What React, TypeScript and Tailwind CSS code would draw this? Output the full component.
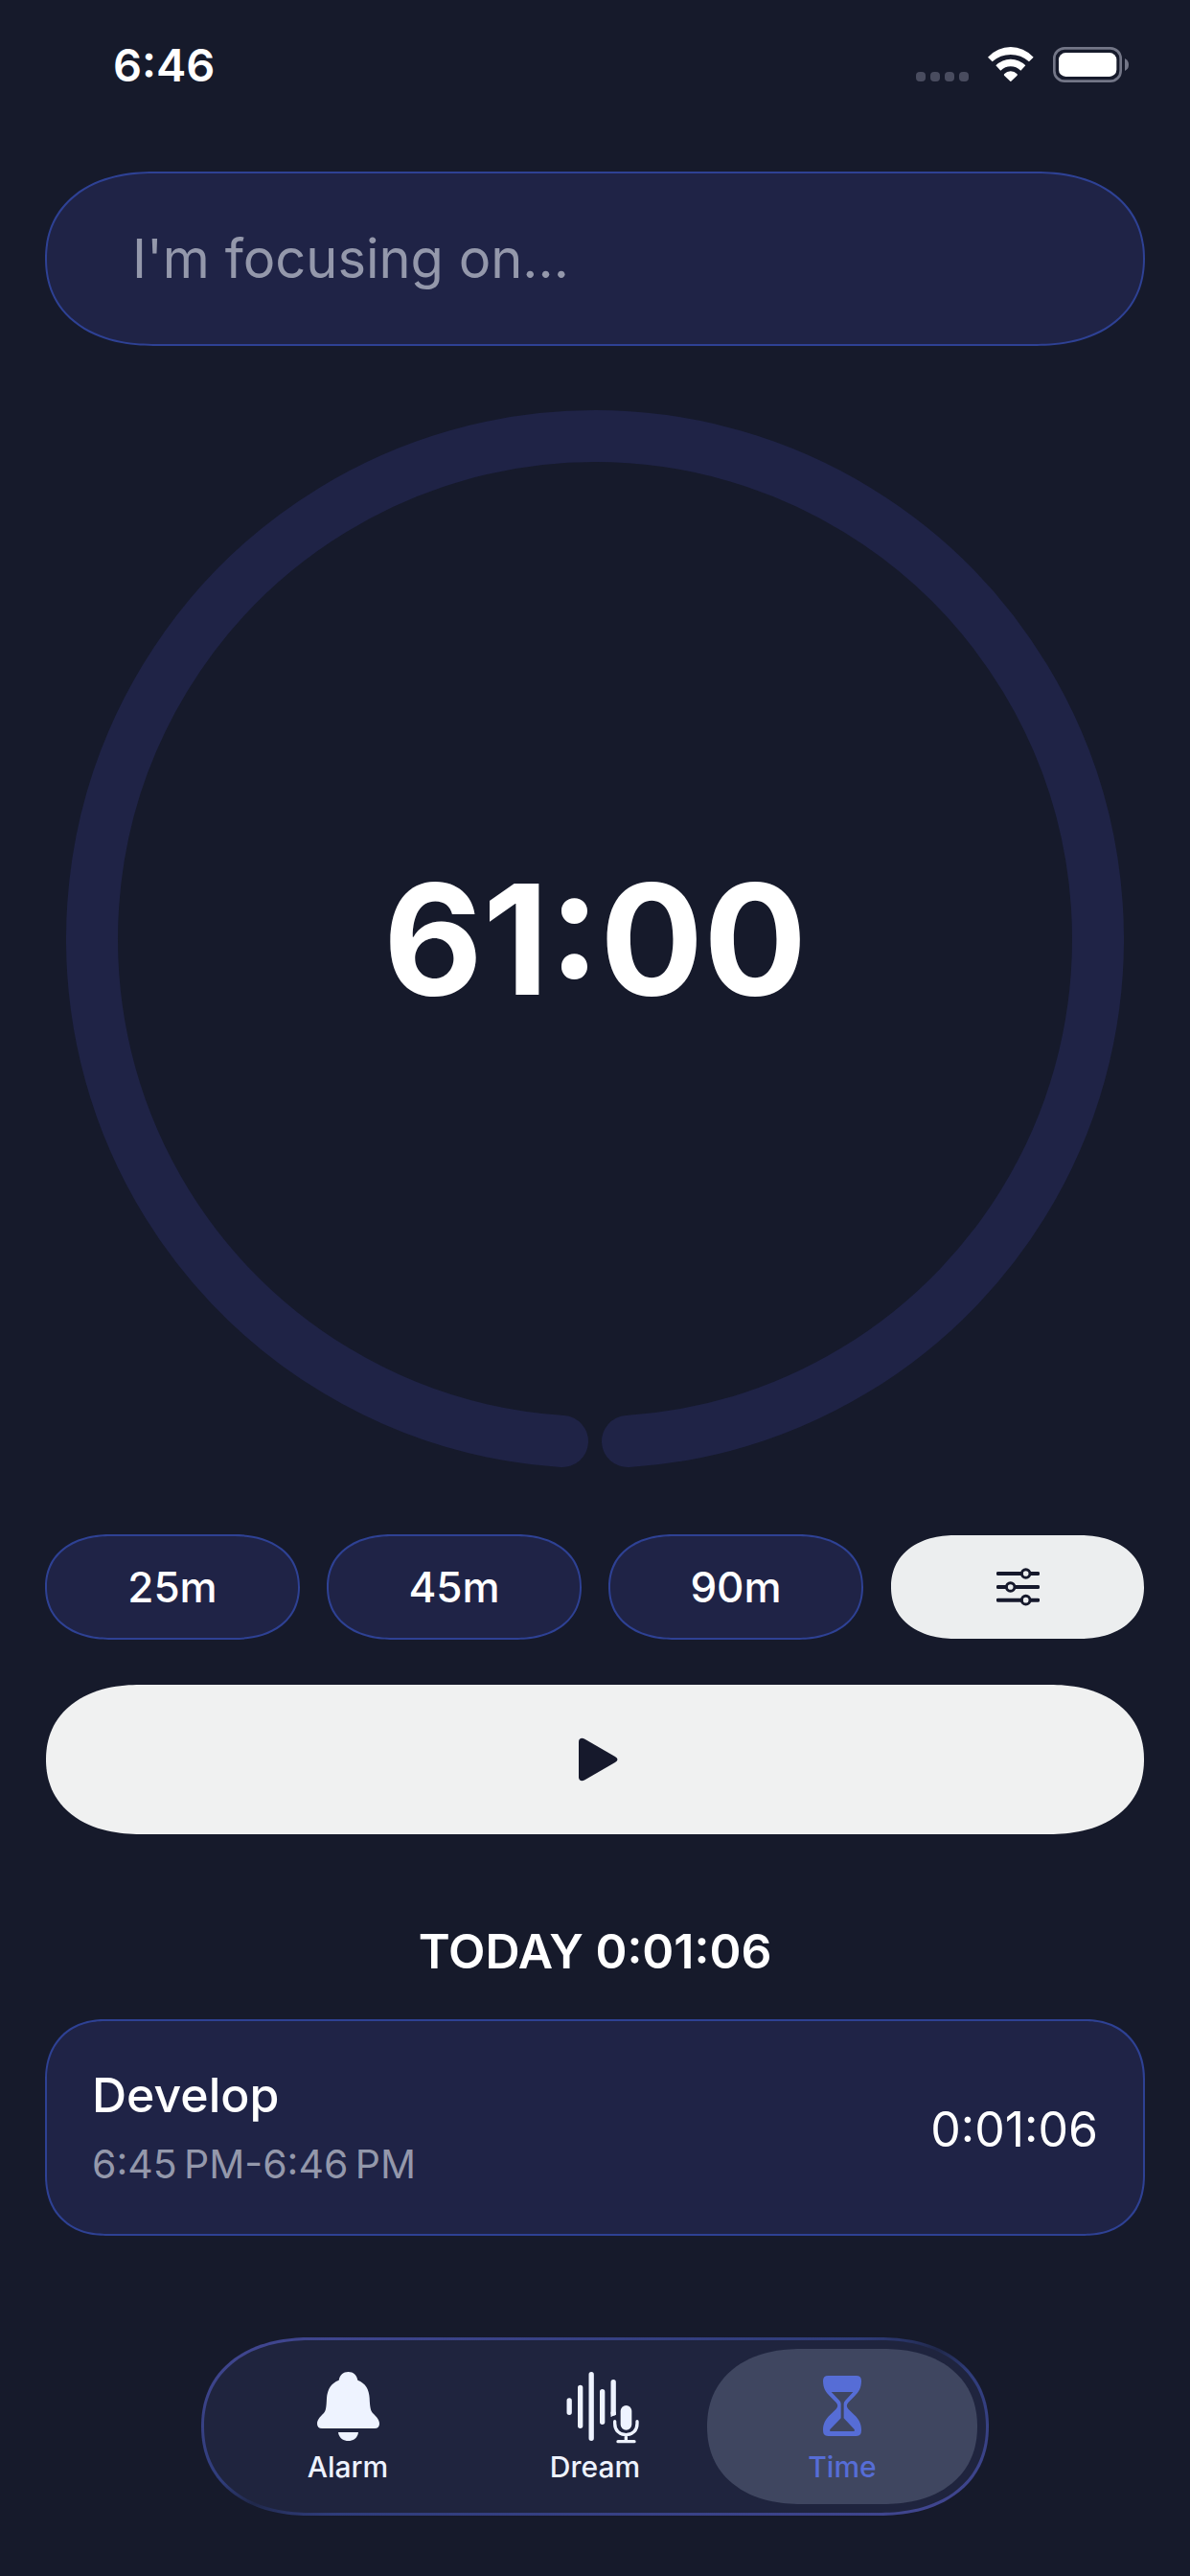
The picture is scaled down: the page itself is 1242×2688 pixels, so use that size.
import { useState } from 'react';
import type { ReactNode } from 'react';
import { clsx } from 'clsx';

const presets = ['25m', '45m', '90m'];

const smooth = '[corner-shape:superellipse(1.15)]';
const outlined = 'bg-[#1f2346] outline-2 -outline-offset-1 outline-[#2e4194]';

function StatusBar() {
  return (
    <header className="flex h-[135px] items-center justify-between pr-16 pl-[118px]">
      <span className="text-[47px] leading-none font-semibold">6:46</span>
      <div className="flex items-center gap-5">
        <svg className="h-[37px] w-[55px]" viewBox="171 87 165 111" fill="#494c5f" aria-hidden="true">
          <rect x="171" y="165" width="30" height="30" rx="12" />
          <rect x="216" y="165" width="30" height="30" rx="12" />
          <rect x="261" y="165" width="30" height="30" rx="12" />
          <rect x="306" y="165" width="30" height="30" rx="12" />
        </svg>
        <svg className="h-[37px] w-12" viewBox="395 87 144 111" fill="#fff" aria-hidden="true">
          <path d="M395 119Q426 87 466.500 87Q507 87 538 119L524 133Q499 111 466.500 111Q434 111 409 133Z" />
          <path d="M420 145Q440 125 466.500 125Q493 125 513 145L498 161Q484 148 466.500 148Q449 148 435 161Z" />
          <path d="M446 172Q455 163 466.500 163Q478 163 487 172Q488 174 487 176L468 194Q466.500 196 465 194L446 176Q445 174 446 172Z" />
        </svg>
        <svg className="h-[37px] w-[79px]" viewBox="597 87 237 111" aria-hidden="true">
          <rect x="601" y="91" width="208" height="103" rx="32" fill="none" stroke="#737687" strokeWidth="8" />
          <rect x="615" y="105" width="181" height="75" rx="22" fill="#fff" />
          <path d="M822 123Q834 129 834 142.500Q834 156 822 162Z" fill="#737687" />
        </svg>
      </div>
    </header>
  );
}

function TimerRing({ time }: { time: string }) {
  return (
    <div className="mx-[21px] mt-[68px] grid place-items-center">
      <svg className="col-start-1 row-start-1 w-full" viewBox="0 0 1104 1104" fill="none" aria-hidden="true">
        <path
          d="M518 1076A525 525 0 1 1 586 1076"
          stroke="#1f2346"
          strokeWidth="54"
          strokeLinecap="round"
        />
      </svg>
      <span className="col-start-1 row-start-1 text-[160px] leading-none font-bold">{time}</span>
    </div>
  );
}

function SlidersIcon() {
  return (
    <svg className="h-10 w-[45px]" viewBox="417 170 135 120" fill="none" stroke="#16192c" aria-hidden="true">
      <path
        d="M422 188H494M525 188H547M422 230H446M477 230H547M422 271H494M525 271H547"
        strokeWidth="12"
        strokeLinecap="round"
      />
      <g strokeWidth="9">
        <circle cx="509" cy="188" r="13" />
        <circle cx="461" cy="230" r="13" />
        <circle cx="509" cy="271" r="13" />
      </g>
    </svg>
  );
}

function PlayIcon() {
  return (
    <svg className="ml-1.5 h-[46px] w-[41px]" viewBox="0 0 41 46" fill="#16192c" aria-hidden="true">
      <path d="M0 4.500C0 1 3 0 6 1.500L38 20Q43 23 38 26L6 44.500C3 46 0 45 0 41.500Z" />
    </svg>
  );
}

function BellIcon() {
  return (
    <svg className="h-[75px] w-[65px]" viewBox="393 165 195 225" fill="currentColor" aria-hidden="true">
      <path d="M461 191C464 174 475 165 490.500 165C506 165 517 174 520 191C544 200 556 220 557 247C558 276 561 288 567 294C575 302 588 313 588 327Q588 342 573 342H408Q393 342 393 327C393 313 406 302 414 294C420 288 422 276 423 247C425 220 437 200 461 191Z" />
      <path d="M459 354H522C520 371 507 381 490.500 381C474 381 461 371 459 354Z" />
    </svg>
  );
}

function WaveMicIcon() {
  return (
    <svg className="ml-4 h-[75px] w-[76px]" viewBox="1171 165 228 225" fill="none" stroke="currentColor" aria-hidden="true">
      <path
        d="M1180.500 255V292M1215 214V334M1249.500 173V373M1284 227V322M1318.500 197V294"
        strokeWidth="16"
        strokeLinecap="round"
      />
      <path d="M1310.500 290H1326.500V300Q1318 300 1312 306L1310.500 305Z" fill="currentColor" stroke="none" />
      <rect x="1341" y="270" width="35" height="77" rx="17.500" fill="currentColor" stroke="none" />
      <path
        d="M1323 320V326C1323 348 1337 362 1358 362C1379 362 1393 348 1393 326V320M1358 362V383M1333 383H1384"
        strokeWidth="10"
        strokeLinecap="round"
      />
    </svg>
  );
}

function HourglassIcon() {
  return (
    <svg className="h-[75px] w-10" viewBox="654 165 120 225" fill="currentColor" fillRule="evenodd" aria-hidden="true">
      <path d="M670 177H758Q774 177 774 193C774 215 766 228 753 241L733 261Q724 271 733 281L753 301C766 314 774 326 774 348Q774 366 758 366H670Q654 366 654 348C654 326 662 314 675 301L695 281Q704 271 695 261L675 241C662 228 654 215 654 193Q654 177 670 177ZM680 228L705 254Q710 259 710 265V310L676 345Q673 351 680 351H748Q755 351 752 345L719 310V265Q719 259 724 254L748 228Z" />
    </svg>
  );
}

const tabs: { label: string; icon: ReactNode }[] = [
  { label: 'Alarm', icon: <BellIcon /> },
  { label: 'Dream', icon: <WaveMicIcon /> },
  { label: 'Time', icon: <HourglassIcon /> },
];

function TabBar() {
  const [active, setActive] = useState('Time');

  return (
    <nav
      className={clsx(
        'mx-auto mt-auto flex rounded-[114px/93px] border-3 border-transparent p-[9px] [background:linear-gradient(#1f243e,#1f243e)_padding-box,linear-gradient(to_bottom_right,#424792,#2f3c7a_42%,#20284a_50%,#2f3c7a_58%,#424792)_border-box]',
        smooth,
      )}
    >
      {tabs.map(({ label, icon }) => (
        <button
          key={label}
          type="button"
          onClick={() => setActive(label)}
          aria-current={active === label ? 'page' : undefined}
          className={clsx(
            'flex h-[162px] w-[282px] flex-col items-center rounded-[98px/81px] pt-6 not-first:-ml-6',
            smooth,
            active === label ? 'bg-[#3f4660] text-[#566dd6]' : 'text-[#eef3ff]',
          )}
        >
          {icon}
          <span className="mt-1.5 text-[30px] leading-9 font-medium">{label}</span>
        </button>
      ))}
    </nav>
  );
}

export default function App() {
  const [focus, setFocus] = useState('');

  return (
    <div className="flex min-h-screen flex-col bg-[#161a2b] pb-[63px] font-['Inter','Liberation_Sans',sans-serif] text-white">
      <StatusBar />
      <main className="flex flex-col px-12 pt-[45px]">
        <input
          type="text"
          aria-label="Focus"
          value={focus}
          onChange={(e) => setFocus(e.target.value)}
          placeholder="I'm focusing on..."
          className={clsx(
            'h-[180px] w-full rounded-[112px/90px] px-[90px] text-[56px] placeholder:text-[#9498ab]',
            outlined,
            smooth,
          )}
        />

        <TimerRing time="61:00" />

        <div className="mt-[70px] grid grid-cols-4 gap-[30px]">
          {presets.map((preset) => (
            <button
              key={preset}
              type="button"
              className={clsx('h-[108px] rounded-[68px/54px] text-[44px] leading-none font-medium', outlined, smooth)}
            >
              {preset}
            </button>
          ))}
          <button
            type="button"
            aria-label="Custom duration"
            className={clsx('grid h-[108px] place-items-center rounded-[68px/54px] bg-[#eceeef]', smooth)}
          >
            <SlidersIcon />
          </button>
        </div>

        <button
          type="button"
          aria-label="Start"
          className={clsx('mt-12 grid h-[156px] place-items-center rounded-[98px/78px] bg-[#f0f1f1]', smooth)}
        >
          <PlayIcon />
        </button>

        <h2 className="mt-[92px] text-center text-[50px] leading-[60px] font-semibold">TODAY 0:01:06</h2>

        <section
          className={clsx(
            'mt-[42px] flex h-[224px] items-center justify-between rounded-[62px] px-12 pt-1',
            outlined,
            smooth,
          )}
        >
          <div>
            <h3 className="text-[50px] leading-[60px] font-medium">Develop</h3>
            <p className="mt-3 text-[41px] leading-[60px] text-[#9498ab]">{'6:45\u202fPM-6:46\u202fPM'}</p>
          </div>
          <span className="text-[50px] leading-none">0:01:06</span>
        </section>
      </main>
      <TabBar />
    </div>
  );
}
